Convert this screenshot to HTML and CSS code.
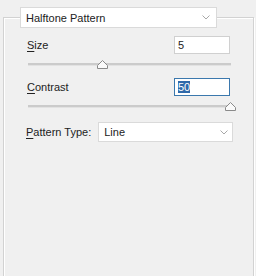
FILE: index.html
```html
<!DOCTYPE html>
<html lang="en">
<head>
    <meta charset="UTF-8">
    <title>Halftone Pattern</title>
    <link rel="stylesheet" href="styles.css">
</head>
<body>
<fieldset class="group">
    <legend class="combo combo-head">
        <span>Halftone Pattern</span>
        <svg class="chevron" width="8" height="5" viewBox="0 0 8 5"><path d="M0.5 0.5 L4 4 L7.5 0.5" fill="none" stroke="#a8a8a8" stroke-width="1"/></svg>
    </legend>

    <div class="param">
        <div class="param-row">
            <label class="param-label"><u>S</u>ize</label>
            <div class="field">5</div>
        </div>
        <div class="slider">
            <div class="track"></div>
            <svg class="thumb" style="left: 37%" width="11" height="9" viewBox="0 0 11 9"><path d="M5.5 0.5 L10.5 5.5 L10.5 8.5 L0.5 8.5 L0.5 5.5 Z" fill="#fafafa" stroke="#8a8a8a" stroke-width="1"/></svg>
        </div>
    </div>

    <div class="param">
        <div class="param-row">
            <label class="param-label"><u>C</u>ontrast</label>
            <div class="field field-focus"><span class="selected">50</span></div>
        </div>
        <div class="slider">
            <div class="track"></div>
            <svg class="thumb" style="left: 99.5%" width="11" height="9" viewBox="0 0 11 9"><path d="M5.5 0.5 L10.5 5.5 L10.5 8.5 L0.5 8.5 L0.5 5.5 Z" fill="#fafafa" stroke="#8a8a8a" stroke-width="1"/></svg>
        </div>
    </div>

    <div class="type-row">
        <label class="param-label"><u>P</u>attern Type:</label>
        <div class="combo combo-type">
            <span>Line</span>
            <svg class="chevron" width="8" height="5" viewBox="0 0 8 5"><path d="M0.5 0.5 L4 4 L7.5 0.5" fill="none" stroke="#a8a8a8" stroke-width="1"/></svg>
        </div>
    </div>
</fieldset>
</body>
</html>
```

FILE: styles.css
```css
body {
    margin: 0;
    background: #f0f0f0;
    font-family: "Liberation Sans", Arial, sans-serif;
    font-size: 11px;
    color: #222;
    height: 276px;
    overflow: hidden;
}
.group {
    margin: 7px 2px 0 3px;
    padding: 8px 22px 0 22px;
    border: 1px solid #d2d2d2;
    box-shadow: inset 1px 1px 0 #fff, 1px 1px 0 #fff;
    min-height: 300px;
}
.combo {
    display: flex;
    align-items: center;
    justify-content: space-between;
    background: #fff;
    border: 1px solid #dadada;
    box-sizing: border-box;
    padding: 0 4px 0 5px;
}
.combo-head {
    width: 197px;
    height: 21px;
    margin-left: -6px;
    padding-right: 6px;
}
.chevron {
    display: block;
}
.param-row {
    display: flex;
    align-items: center;
    justify-content: space-between;
    height: 18px;
    padding-left: 1px;
}
.param-label u {
    text-decoration-thickness: 1px;
    text-underline-offset: 2px;
}
.field {
    width: 56px;
    height: 18px;
    box-sizing: border-box;
    background: #fff;
    border: 1px solid #d0d0d0;
    padding: 0 3px;
    line-height: 16px;
    margin-right: 1px;
}
.field-focus {
    border-color: #3b78ad;
}
.selected {
    background: #2f69a9;
    color: #fff;
}
.slider {
    position: relative;
    height: 10px;
    margin: 5px 0 9px 0;
}
.track {
    position: absolute;
    left: 2px;
    right: 0;
    top: 4px;
    height: 2px;
    background: #cbcbcb;
    border-bottom: 1px solid #e2e2e2;
}
.thumb {
    position: absolute;
    top: 1px;
    margin-left: -5px;
}
.type-row {
    display: flex;
    align-items: center;
    gap: 7px;
    margin-top: 11px;
}
.combo-type {
    flex: 1;
    height: 20px;
    margin-right: -2px;
}
```
